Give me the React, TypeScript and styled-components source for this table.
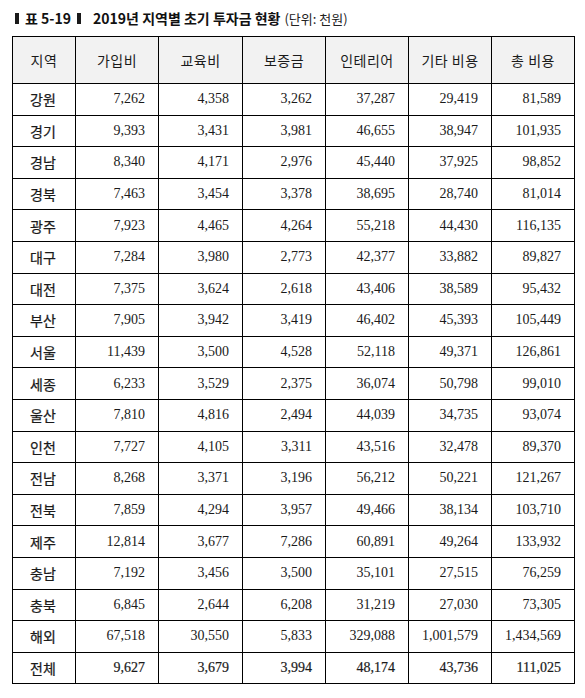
import React from "react";
import styled, { createGlobalStyle } from "styled-components";

const GlobalStyle = createGlobalStyle`
  html, body {
    margin: 0;
    padding: 0;
    background: #ffffff;
  }
  body {
    font-family: "Noto Sans CJK KR", "Noto Sans", sans-serif;
    color: #111;
  }
`;

type Row = { region: string; values: number[] };

const rows: Row[] = [
  { region: "강원", values: [7262, 4358, 3262, 37287, 29419, 81589] },
  { region: "경기", values: [9393, 3431, 3981, 46655, 38947, 101935] },
  { region: "경남", values: [8340, 4171, 2976, 45440, 37925, 98852] },
  { region: "경북", values: [7463, 3454, 3378, 38695, 28740, 81014] },
  { region: "광주", values: [7923, 4465, 4264, 55218, 44430, 116135] },
  { region: "대구", values: [7284, 3980, 2773, 42377, 33882, 89827] },
  { region: "대전", values: [7375, 3624, 2618, 43406, 38589, 95432] },
  { region: "부산", values: [7905, 3942, 3419, 46402, 45393, 105449] },
  { region: "서울", values: [11439, 3500, 4528, 52118, 49371, 126861] },
  { region: "세종", values: [6233, 3529, 2375, 36074, 50798, 99010] },
  { region: "울산", values: [7810, 4816, 2494, 44039, 34735, 93074] },
  { region: "인천", values: [7727, 4105, 3311, 43516, 32478, 89370] },
  { region: "전남", values: [8268, 3371, 3196, 56212, 50221, 121267] },
  { region: "전북", values: [7859, 4294, 3957, 49466, 38134, 103710] },
  { region: "제주", values: [12814, 3677, 7286, 60891, 49264, 133932] },
  { region: "충남", values: [7192, 3456, 3500, 35101, 27515, 76259] },
  { region: "충북", values: [6845, 2644, 6208, 31219, 27030, 73305] },
  { region: "해외", values: [67518, 30550, 5833, 329088, 1001579, 1434569] },
];

const total: Row = { region: "전체", values: [9627, 3679, 3994, 48174, 43736, 111025] };

const headers = ["지역", "가입비", "교육비", "보증금", "인테리어", "기타 비용", "총 비용"];
const widths = [63, 83, 84, 83, 83, 83, 83];

const fmt = (n: number) => n.toLocaleString("en-US");

const Page = styled.div`
  padding: 9px 0 0 12px;
`;

const Caption = styled.div`
  display: flex;
  align-items: center;
  height: 18px;
  margin-bottom: 9px;
  padding-left: 3px;
  font-size: 14px;
  color: #111;
`;

const Marker = styled.span<{ $gap: number }>`
  display: inline-block;
  width: 4px;
  height: 11px;
  background: #1a1a1a;
  margin-right: ${(p) => p.$gap}px;
`;

const Label = styled.span`
  font-weight: 700;
  margin-right: 6px;
`;

const Title = styled.span`
  font-weight: 700;
`;

const Unit = styled.span`
  font-size: 13px;
  font-weight: 400;
  margin-left: 4px;
  color: #222;
`;

const Table = styled.table`
  border-collapse: collapse;
  table-layout: fixed;
  width: 562px;
`;

const HeadCell = styled.th`
  height: 46px;
  padding: 0;
  border: 1px solid #000;
  background: #f2f2f2;
  font-weight: 400;
  font-size: 14px;
  text-align: center;
  color: #1a1a1a;
  letter-spacing: 0.5px;
`;

const RegionCell = styled.td`
  height: 30.6px;
  padding: 0 2px 0 0;
  border: 1px solid #000;
  text-align: center;
  font-size: 14px;
  font-weight: 400;
  -webkit-text-stroke: 0.25px #1a1a1a;
  color: #1a1a1a;
`;

const NumCell = styled.td<{ $bold?: boolean }>`
  padding: 0 13px 0 0;
  border: 1px solid #000;
  text-align: right;
  font-family: "Liberation Serif", "Times New Roman", serif;
  font-size: 14px;
  font-weight: 400;
  -webkit-text-stroke: ${(p) => (p.$bold ? "0.2px #1a1a1a" : "0")};
  color: #1a1a1a;
`;

const DataRow = ({ row, bold }: { row: Row; bold?: boolean }) => (
  <tr>
    <RegionCell>{row.region}</RegionCell>
    {row.values.map((v, i) => (
      <NumCell key={i} $bold={bold}>
        {fmt(v)}
      </NumCell>
    ))}
  </tr>
);

export default function App() {
  return (
    <>
      <GlobalStyle />
      <Page>
        <Caption>
          <Marker $gap={6} />
          <Label>표 5-19</Label>
          <Marker $gap={12} />
          <Title>2019년 지역별 초기 투자금 현황</Title>
          <Unit>(단위: 천원)</Unit>
        </Caption>
        <Table>
          <colgroup>
            {widths.map((w, i) => (
              <col key={i} style={{ width: w }} />
            ))}
          </colgroup>
          <thead>
            <tr>
              {headers.map((h) => (
                <HeadCell key={h}>{h}</HeadCell>
              ))}
            </tr>
          </thead>
          <tbody>
            {rows.map((r) => (
              <DataRow key={r.region} row={r} />
            ))}
            <DataRow row={total} bold />
          </tbody>
        </Table>
      </Page>
    </>
  );
}
